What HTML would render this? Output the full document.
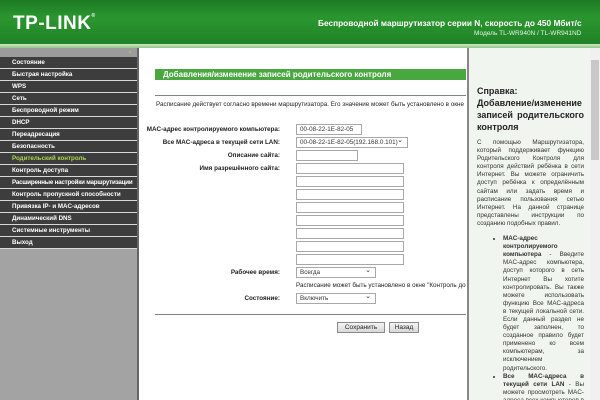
<!DOCTYPE html>
<html><head><meta charset="utf-8"><style>
*{margin:0;padding:0;box-sizing:border-box}
body{width:600px;height:400px;overflow:hidden;background:#fff;font-family:"Liberation Sans","DejaVu Sans",sans-serif;position:relative}
.a{position:absolute}
#hdr{left:0;top:0;width:600px;height:44px;background:linear-gradient(#1c7a24,#2b962f 40%,#1f8226)}
#strip{left:0;top:44px;width:600px;height:4px;background:linear-gradient(#cfe8c9,#8fc88a)}
.logo{left:13px;top:13px;color:#fff;font-weight:bold;font-size:19px;letter-spacing:0.5px;white-space:nowrap}
.t1{left:318px;top:18px;color:#fff;font-weight:bold;font-size:8.3px;white-space:nowrap}
.t2{left:474px;top:30px;color:#e8f5e8;font-size:6.5px;white-space:nowrap}
#left{left:0;top:48px;width:137px;height:352px;background:#a3a3a3}
#left .top{height:9px;background:#9c9c9c}
.mi{height:12px;background:#3d3d3d;border-bottom:1px solid #d8d8d8;color:#fff;font-size:6.2px;font-weight:bold;padding-left:12px;line-height:11px;white-space:nowrap;overflow:hidden}
.mi.sel{color:#a6d64c}
#divl{left:137px;top:48px;width:2px;height:352px;background:#666}
#main{left:139px;top:48px;width:328px;height:352px;background:#fff}
.title{left:155px;top:69px;width:311px;height:11px;background:#48a83f;color:#fff;font-weight:bold;font-size:8px;padding-left:8px;line-height:11px;white-space:nowrap}
.hl{height:1px;background:#7a8a7a}
.s{font-size:6.3px;color:#222;white-space:nowrap}
.lb{font-size:6.3px;font-weight:bold;color:#222;text-align:right;width:160px;left:120px;white-space:nowrap}
.in{left:296px;height:11px;border:1px solid #a8a8a8;background:#fff;font-size:6.3px;padding-left:3px;line-height:9px;color:#333;white-space:nowrap}
.sel:after{content:"⌄";position:absolute;right:4px;top:-2px;font-size:7px}
.btn{height:11px;border:1px solid #8a8a8a;background:linear-gradient(#f4f4f4,#d8d8d8);font-size:6.5px;line-height:9px;text-align:center;color:#222}
#help{left:467px;top:48px;width:123px;height:352px;background:#f1f5ef;border-left:2px solid #888;padding:0 6px 0 8px;overflow:hidden}
#sb{left:590px;top:48px;width:10px;height:352px;background:#f0f0f0}
.h{font-size:9px;font-weight:bold;color:#222;line-height:12px;text-align:justify}
.p{font-size:6.3px;color:#333;line-height:8.1px;text-align:justify}
</style></head><body>
<div id="hdr" class="a"></div><div id="strip" class="a"></div>
<div class="a logo">TP-LINK<span style="font-size:5px;vertical-align:top">®</span></div>
<div class="a t1">Беспроводной маршрутизатор серии N, скорость до 450 Мбит/с</div>
<div class="a t2">Модель TL-WR940N / TL-WR941ND</div>
<div id="left" class="a"><div class="top"></div>
<div class="mi">Состояние</div><div class="mi">Быстрая настройка</div><div class="mi">WPS</div><div class="mi">Сеть</div><div class="mi">Беспроводной режим</div><div class="mi">DHCP</div><div class="mi">Переадресация</div><div class="mi">Безопасность</div><div class="mi sel">Родительский контроль</div><div class="mi">Контроль доступа</div><div class="mi" style="letter-spacing:-0.2px">Расширенные настройки маршрутизации</div><div class="mi">Контроль пропускной способности</div><div class="mi">Привязка IP- и MAC-адресов</div><div class="mi">Динамический DNS</div><div class="mi">Системные инструменты</div><div class="mi">Выход</div>
</div>
<div id="divl" class="a"></div>
<div id="main" class="a"></div>
<div class="a title">Добавления/изменение записей родительского контроля</div>
<div class="a hl" style="left:155px;top:95px;width:311px"></div>
<div class="a s" style="left:156px;top:101px;width:310px;overflow:hidden">Расписание действует согласно времени маршрутизатора. Его значение может быть установлено в окне "Системные</div>
<div class="a lb" style="top:126px">MAC-адрес контролируемого компьютера:</div>
<div class="a in" style="top:124px;width:66px">00-08-22-1E-82-05</div>
<div class="a lb" style="top:139px">Все MAC-адреса в текущей сети LAN:</div>
<div class="a in sel" style="top:137px;width:112px">00-08-22-1E-82-05(192.168.0.101)</div>
<div class="a lb" style="top:152px">Описание сайта:</div>
<div class="a in" style="top:150px;width:62px"></div>
<div class="a lb" style="top:165px">Имя разрешённого сайта:</div>
<div class="a in" style="top:163px;width:108px"></div>
<div class="a in" style="top:176px;width:108px"></div>
<div class="a in" style="top:189px;width:108px"></div>
<div class="a in" style="top:202px;width:108px"></div>
<div class="a in" style="top:215px;width:108px"></div>
<div class="a in" style="top:228px;width:108px"></div>
<div class="a in" style="top:241px;width:108px"></div>
<div class="a in" style="top:254px;width:108px"></div>
<div class="a lb" style="top:269px">Рабочее время:</div>
<div class="a in sel" style="top:267px;width:80px">Всегда</div>
<div class="a s" style="left:296px;top:282px;width:170px;overflow:hidden">Расписание может быть установлено в окне "Контроль доступа"</div>
<div class="a lb" style="top:295px">Состояние:</div>
<div class="a in sel" style="top:293px;width:80px">Включить</div>
<div class="a hl" style="left:155px;top:314px;width:311px"></div>
<div class="a btn" style="left:337px;top:322px;width:48px">Сохранить</div>
<div class="a btn" style="left:389px;top:322px;width:30px">Назад</div>
<div id="help" class="a">
<div style="height:37px"></div>
<div class="h">Справка:<br>Добавление/изменение записей родительского контроля</div>
<div style="height:6px"></div>
<div class="p">С помощью Маршрутизатора, который поддерживает функцию Родительского Контроля для контроля действий ребёнка в сети Интернет. Вы можете ограничить доступ ребёнка к определённым сайтам или задать время и расписание пользования сетью Интернет. На данной странице представлены инструкции по созданию подобных правил.</div>
<div style="height:7px"></div>
<ul class="p" style="padding-left:26px">
<li><b>MAC-адрес контролируемого компьютера</b> - Введите MAC-адрес компьютера, доступ которого в сеть Интернет Вы хотите контролировать. Вы также можете использовать функцию Все MAC-адреса в текущей локальной сети. Если данный раздел не будет заполнен, то созданное правило будет применено ко всем компьютерам, за исключением родительского.</li>
<li><b>Все MAC-адреса в текущей сети LAN</b> - Вы можете просмотреть MAC-адреса всех компьютеров в данной локальной сети. Для этого необходимо нажать на кнопку выпадающего списка. Выберите один из представленных в списке, данный MAC-адрес будет</li>
</ul>
</div>
<div id="sb" class="a"><div class="a" style="left:1px;top:12px;width:8px;height:100px;background:#c8c8c8"></div></div>
</body></html>
